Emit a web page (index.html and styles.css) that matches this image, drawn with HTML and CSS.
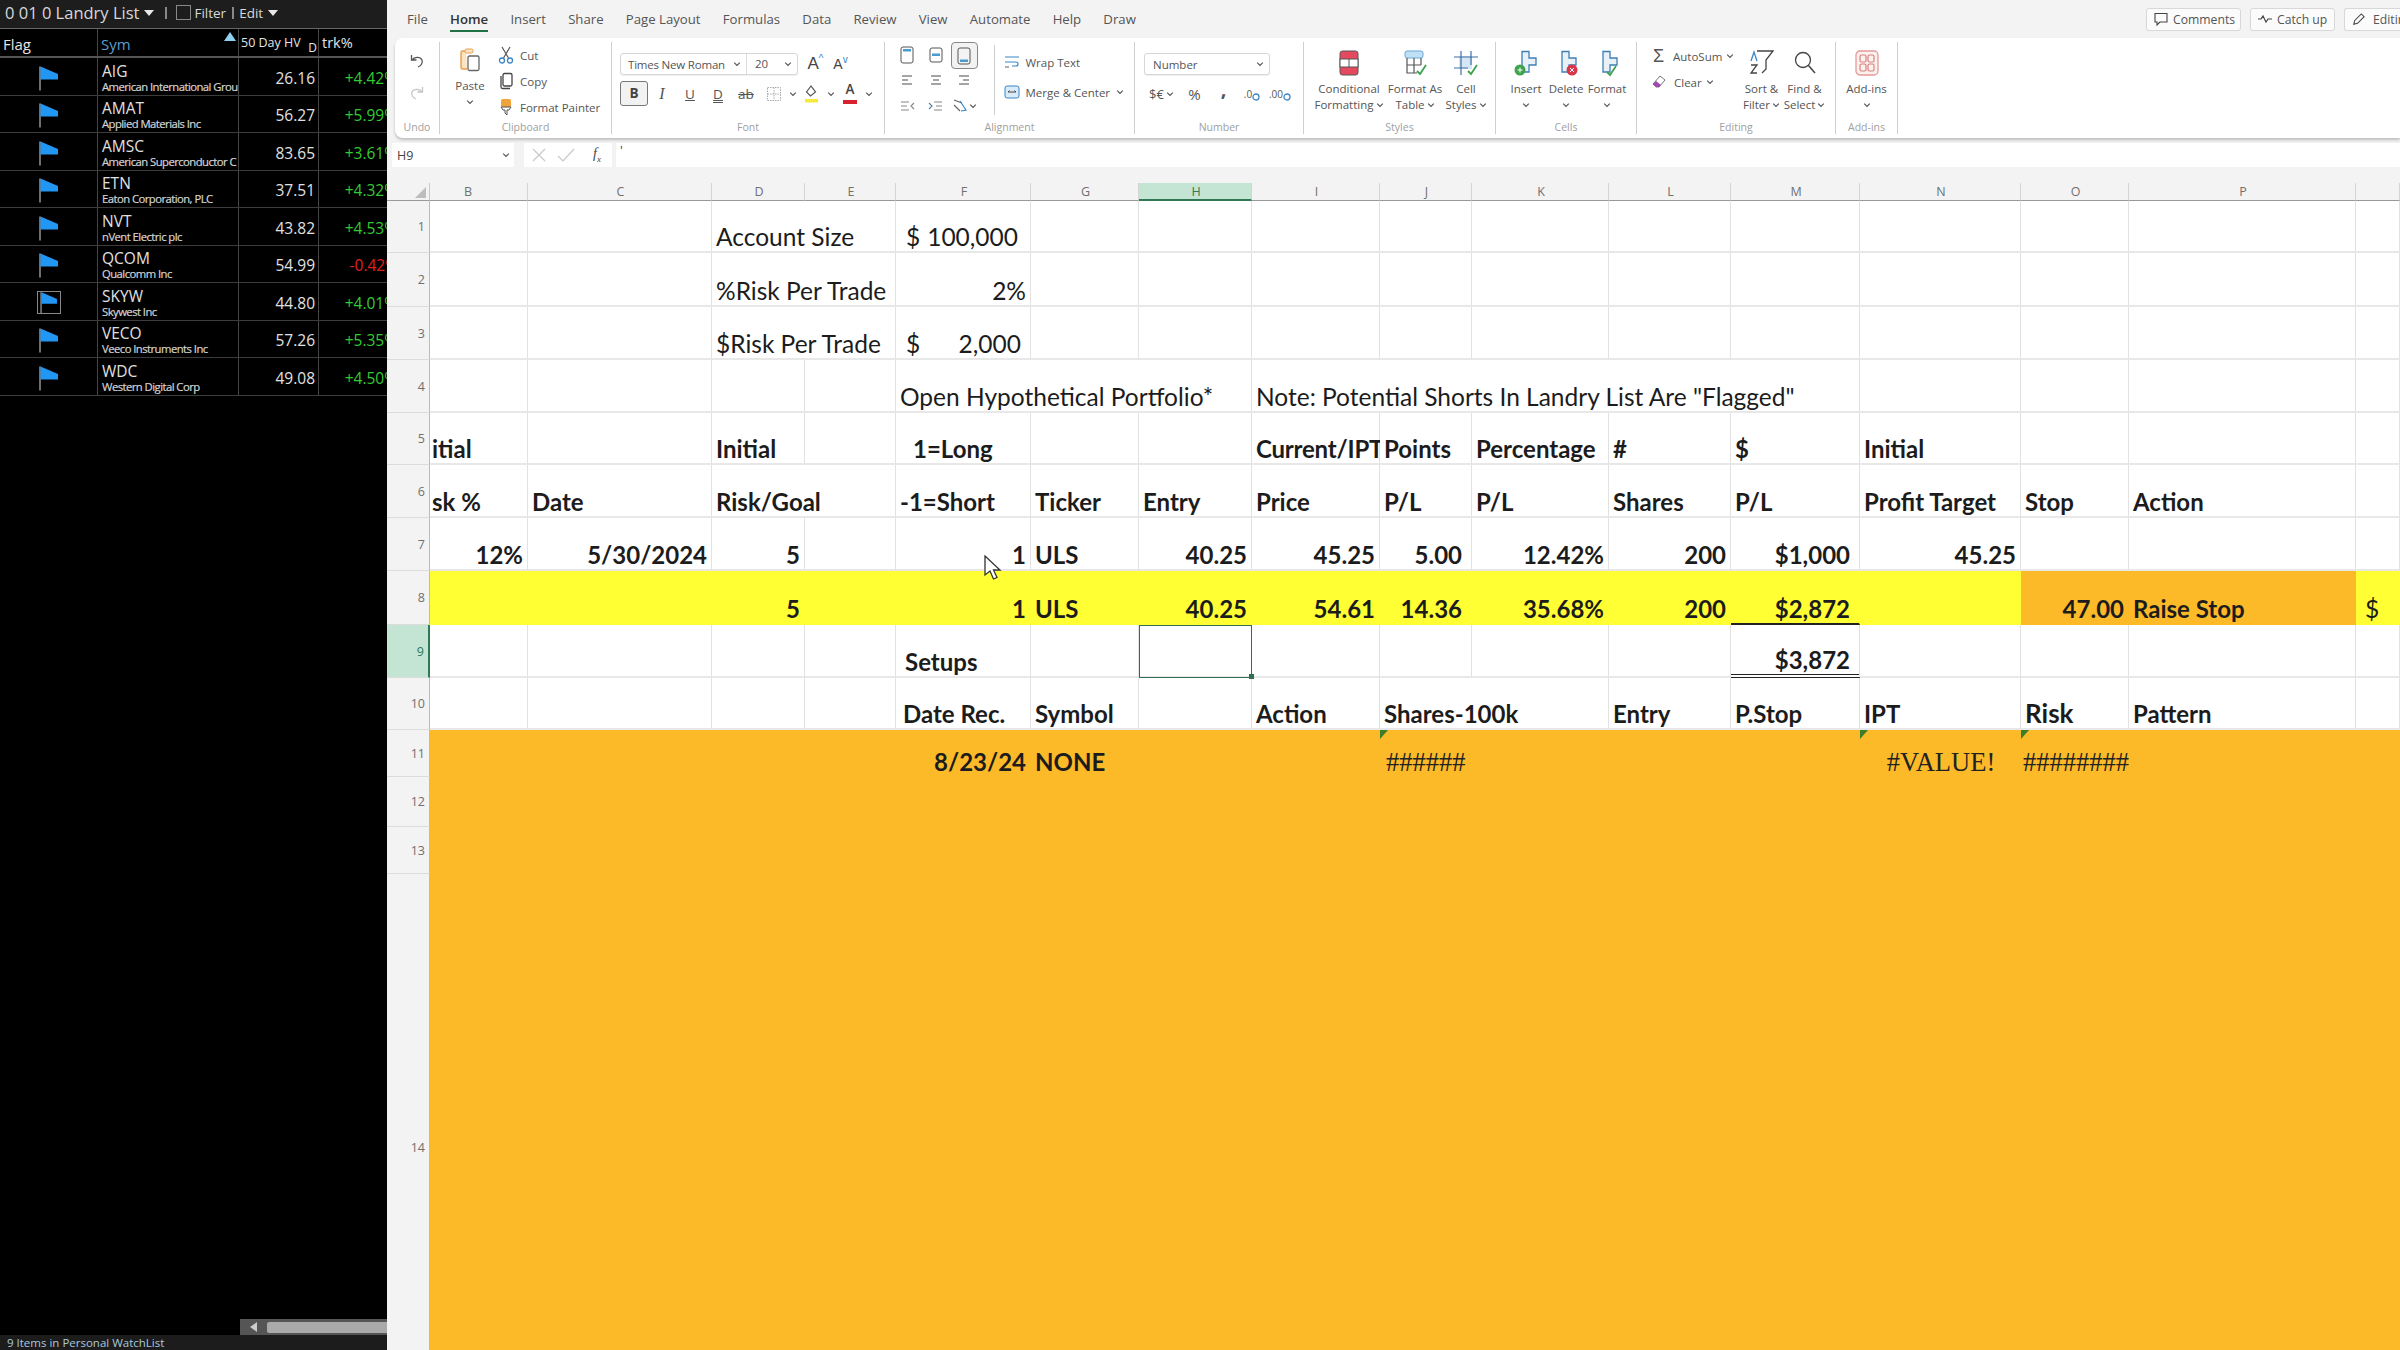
FILE: index.html
```html
<!DOCTYPE html>
<html lang="en">
<head>
<meta charset="utf-8">
<title>Landry List</title>
<link rel="stylesheet" href="styles.css">
</head>
<body>
<svg class="sprite" width="0" height="0">
  <symbol id="ch" viewBox="0 0 8 8"><path d="M1.2 2.6 4 5.4l2.8-2.8" fill="none" stroke="#555" stroke-width="1.2"/></symbol>
  <symbol id="flag" viewBox="0 0 24 26"><path d="M3 1.5v24" stroke="#ddd" stroke-width="1" fill="none"/><path d="M3.5 1.5 21 9v5.5H3.5z" fill="#2196f3"/></symbol>
  <symbol id="ins" viewBox="0 0 26 28"><path d="M9 9V2.5h7V9h7v7h-7v7H9z" fill="#e8f1f8" stroke="#3d7fb5" stroke-width="1.3"/></symbol>
</svg>
<div class="app">
  <aside class="watch">
    <div class="w-top">
      <span class="w-title">0 01 0 Landry List</span><i class="w-tri"></i>
      <i class="w-sep"></i><i class="w-box"></i><span class="w-filter">Filter</span>
      <i class="w-sep w-sep2"></i><span class="w-edit">Edit</span><i class="w-tri"></i>
    </div>
    <div class="w-row w-head">
      <div class="wc">Flag</div>
      <div class="wc w-sym">Sym<i class="w-sort"></i></div>
      <div class="wc w-hv">50 Day HV<sub>D</sub></div>
      <div class="wc w-trk">trk%</div>
    </div>
    <div class="w-row"><div class="wc wf"><svg class="flag"><use href="#flag"/></svg></div><div class="wc wn"><b>AIG</b><small>American International Grou</small></div><div class="wc wv">26.16</div><div class="wc wp"><span>+4.42%</span></div></div>
    <div class="w-row"><div class="wc wf"><svg class="flag"><use href="#flag"/></svg></div><div class="wc wn"><b>AMAT</b><small>Applied Materials Inc</small></div><div class="wc wv">56.27</div><div class="wc wp"><span>+5.99%</span></div></div>
    <div class="w-row"><div class="wc wf"><svg class="flag"><use href="#flag"/></svg></div><div class="wc wn"><b>AMSC</b><small>American Superconductor C</small></div><div class="wc wv">83.65</div><div class="wc wp"><span>+3.61%</span></div></div>
    <div class="w-row"><div class="wc wf"><svg class="flag"><use href="#flag"/></svg></div><div class="wc wn"><b>ETN</b><small>Eaton Corporation, PLC</small></div><div class="wc wv">37.51</div><div class="wc wp"><span>+4.32%</span></div></div>
    <div class="w-row"><div class="wc wf"><svg class="flag"><use href="#flag"/></svg></div><div class="wc wn"><b>NVT</b><small>nVent Electric plc</small></div><div class="wc wv">43.82</div><div class="wc wp"><span>+4.53%</span></div></div>
    <div class="w-row"><div class="wc wf"><svg class="flag"><use href="#flag"/></svg></div><div class="wc wn"><b>QCOM</b><small>Qualcomm Inc</small></div><div class="wc wv">54.99</div><div class="wc wp neg"><span>-0.42%</span></div></div>
    <div class="w-row"><div class="wc wf"><svg class="flag flag-sel"><use href="#flag"/></svg></div><div class="wc wn"><b>SKYW</b><small>Skywest Inc</small></div><div class="wc wv">44.80</div><div class="wc wp"><span>+4.01%</span></div></div>
    <div class="w-row"><div class="wc wf"><svg class="flag"><use href="#flag"/></svg></div><div class="wc wn"><b>VECO</b><small>Veeco Instruments Inc</small></div><div class="wc wv">57.26</div><div class="wc wp"><span>+5.35%</span></div></div>
    <div class="w-row"><div class="wc wf"><svg class="flag"><use href="#flag"/></svg></div><div class="wc wn"><b>WDC</b><small>Western Digital Corp</small></div><div class="wc wv">49.08</div><div class="wc wp"><span>+4.50%</span></div></div>
    <div class="w-fill"></div>
    <div class="w-scroll"><span class="w-arrow"><i></i></span><span class="w-thumb"></span></div>
    <div class="w-status">9 Items in Personal WatchList</div>
  </aside>

  <main class="excel">
    <nav class="tabs">
      <span>File</span><span class="on">Home</span><span>Insert</span><span>Share</span><span>Page Layout</span><span>Formulas</span><span>Data</span><span>Review</span><span>View</span><span>Automate</span><span>Help</span><span>Draw</span>
      <div class="acts">
        <button class="act a-com"><svg width="16" height="16" viewBox="0 0 16 16"><path d="M2 2.5h12v8.5H7l-3 3v-3H2z" fill="none" stroke="#444" stroke-width="1.1"/></svg>Comments</button>
        <button class="act a-cat"><svg width="16" height="12" viewBox="0 0 16 12"><path d="M1 6h3l2-3 3 6 2-3h4" fill="none" stroke="#444" stroke-width="1.2"/></svg>Catch up</button>
        <button class="act a-edi"><svg width="15" height="15" viewBox="0 0 16 16"><path d="M3 13l1-4 7-7 3 3-7 7z" fill="none" stroke="#444" stroke-width="1.1"/></svg>Editing</button>
      </div>
    </nav>

    <section class="ribbon">
      <div class="g g-undo">
        <div class="g-b undo-b">
          <svg width="16" height="16" viewBox="0 0 16 16"><path d="M2.5 2v5h5M3 7c2-3 8-4 10 0 1 3-1 6-4 7" fill="none" stroke="#555" stroke-width="1.3"/></svg>
          <svg width="16" height="16" viewBox="0 0 16 16"><path d="M13.500 2v5h-5M13 7c-2-3-8-4-10 0-1 3 1 6 4 7" fill="none" stroke="#c4c4c4" stroke-width="1.3"/></svg>
        </div>
        <div class="g-l">Undo</div>
      </div>
      <div class="g g-clip">
        <div class="g-b row">
          <div class="big paste">
            <svg width="22" height="24" viewBox="0 0 22 24"><path d="M7 3H3.500A1.500 1.500 0 0 0 2 4.500v15A1.500 1.500 0 0 0 3.500 21H8" fill="#fbe3c4" stroke="#e9a04c" stroke-width="1.4"/><rect x="6" y="1" width="8" height="4" rx="1.500" fill="#fbe3c4" stroke="#e9a04c"/><rect x="9" y="8" width="11" height="14.500" rx="1.500" fill="#fff" stroke="#666" stroke-width="1.3"/></svg>
            <span class="lb">Paste</span>
            <svg class="chev"><use href="#ch"/></svg>
          </div>
          <div class="list clip-list">
            <div><svg width="16" height="18" viewBox="0 0 16 18"><path d="M4 1l6.500 11M12 1 5.500 12" stroke="#555" stroke-width="1.2" fill="none"/><circle cx="4" cy="14.500" r="2.500" fill="none" stroke="#3b86c6" stroke-width="1.300"/><circle cx="12" cy="14.500" r="2.500" fill="none" stroke="#3b86c6" stroke-width="1.300"/></svg>Cut</div>
            <div><svg width="16" height="18" viewBox="0 0 16 18"><rect x="5" y="1.500" width="9" height="12.500" rx="1.500" fill="#fff" stroke="#444" stroke-width="1.3"/><path d="M3 4v11a1.500 1.500 0 0 0 1.500 1.500H12" fill="none" stroke="#444" stroke-width="1.3"/></svg>Copy</div>
            <div><svg width="16" height="18" viewBox="0 0 16 18"><rect x="3" y="1" width="10" height="8" rx="1.500" fill="#f0a33c"/><path d="M3 9h10l-2 3H9v5l-2-2v-3H5z" fill="#fff" stroke="#555"/></svg>Format Painter</div>
          </div>
        </div>
        <div class="g-l">Clipboard</div>
      </div>
      <div class="g g-font">
        <div class="g-b col">
          <div class="fr1">
            <div class="sel-box fontsel"><span class="fname">Times New Roman</span><svg class="chev"><use href="#ch"/></svg><span class="fsize">20</span><svg class="chev"><use href="#ch"/></svg></div>
            <span class="grow">A<sup>^</sup></span><span class="grow shrink">A<sup>v</sup></span>
          </div>
          <div class="fr2">
            <span class="bbtn">B</span><span class="ti it">I</span><span class="ti un">U</span><span class="ti dn">D</span><span class="ti st">ab</span>
            <span class="ti"><svg width="16" height="16" viewBox="0 0 16 16"><path d="M1.500 1.500h13v13h-13zM8 1.500v13M1.500 8h13" fill="none" stroke="#aaa" stroke-dasharray="1.500 1"/></svg></span><svg class="chev sm"><use href="#ch"/></svg>
            <span class="ti tf"><svg width="16" height="18" viewBox="0 0 16 18"><path d="M7 1 2.500 7l4 4 5-4z" fill="#fff" stroke="#555" stroke-width="1.200"/><rect x="1" y="14" width="13" height="3.500" fill="#f5e93b"/></svg></span><svg class="chev sm"><use href="#ch"/></svg>
            <span class="ti tc">A<i></i></span><svg class="chev sm"><use href="#ch"/></svg>
          </div>
        </div>
        <div class="g-l">Font</div>
      </div>
      <div class="g g-align">
        <div class="g-b row">
          <div class="agrid">
            <span><svg width="14" height="18" viewBox="0 0 14 18"><rect x="1" y="1" width="12" height="16" rx="2" fill="none" stroke="#555"/><rect x="3" y="3" width="8" height="2.500" fill="#4a9bd1"/></svg></span>
            <span><svg width="14" height="18" viewBox="0 0 14 18"><rect x="1" y="2" width="12" height="14" rx="2" fill="none" stroke="#555"/><rect x="3" y="7.500" width="8" height="2.500" fill="#4a9bd1"/></svg></span>
            <span class="on"><svg width="14" height="18" viewBox="0 0 14 18"><rect x="1" y="1" width="12" height="16" rx="2" fill="#f4f4f4" stroke="#555"/><rect x="3" y="12.500" width="8" height="2.500" fill="#4a9bd1"/></svg></span>
            <span><svg width="14" height="12" viewBox="0 0 14 12"><path d="M2 2h10M2 6h6M2 10h10" stroke="#888" stroke-width="1.300"/></svg></span>
            <span><svg width="14" height="12" viewBox="0 0 14 12"><path d="M2 2h10M4 6h6M2 10h10" stroke="#888" stroke-width="1.300"/></svg></span>
            <span><svg width="14" height="12" viewBox="0 0 14 12"><path d="M2 2h10M6 6h6M2 10h10" stroke="#888" stroke-width="1.300"/></svg></span>
            <span><svg width="15" height="12" viewBox="0 0 15 12"><path d="M1 2h8M1 6h6M1 10h8M14 3l-3 3 3 3" stroke="#888" stroke-width="1.200" fill="none"/></svg></span>
            <span><svg width="15" height="12" viewBox="0 0 15 12"><path d="M1 3l3 3-3 3M6 2h8M8 6h6M6 10h8" stroke="#888" stroke-width="1.200" fill="none"/><path d="M1 3l3 3-3 3" stroke="#3b86c6" fill="none"/></svg></span>
            <span class="orient"><svg width="15" height="15" viewBox="0 0 15 15"><path d="M2 2l8 3M2 7l6 6" stroke="#666" fill="none" stroke-width="1.200"/><path d="M8 3l6 9-5 1" stroke="#3b86c6" fill="none" stroke-width="1.200"/></svg><svg class="chev"><use href="#ch"/></svg></span>
          </div>
          <i class="vdiv"></i>
          <div class="list wrap-list">
            <div><svg width="16" height="14" viewBox="0 0 16 14"><path d="M1 2h14M1 7h11a2 2 0 0 1 0 4H8" stroke="#3b86c6" stroke-width="1.200" fill="none"/><path d="M1 12h4" stroke="#777" stroke-width="1.200"/></svg>Wrap Text</div>
            <div><svg width="16" height="16" viewBox="0 0 16 16"><rect x="1" y="2" width="14" height="12" rx="2" fill="#d9ebf7" stroke="#3b86c6"/><path d="M4 8h8M4 8l1.500-1.500M12 8l-1.500-1.500" stroke="#444" fill="none"/></svg>Merge &amp; Center<svg class="chev"><use href="#ch"/></svg></div>
          </div>
        </div>
        <div class="g-l">Alignment</div>
      </div>
      <div class="g g-num">
        <div class="g-b col">
          <div class="sel-box numsel"><span>Number</span><svg class="chev"><use href="#ch"/></svg></div>
          <div class="nr">
            <span class="cur">$€<svg class="chev"><use href="#ch"/></svg></span><span class="pct">%</span><span class="cma">,</span>
            <span class="dec">.0<svg width="8" height="8" viewBox="0 0 8 8"><circle cx="4" cy="4" r="3" fill="none" stroke="#3b86c6" stroke-width="1.300"/></svg></span>
            <span class="dec">.00<svg width="8" height="8" viewBox="0 0 8 8"><circle cx="4" cy="4" r="3" fill="none" stroke="#3b86c6" stroke-width="1.300"/></svg></span>
          </div>
        </div>
        <div class="g-l">Number</div>
      </div>
      <div class="g g-sty">
        <div class="g-b row">
          <div class="big b-cf">
            <svg width="22" height="26" viewBox="0 0 22 26"><rect x="2" y="1" width="18" height="24" rx="2.500" fill="#e5495f" stroke="#555"/><rect x="2" y="9" width="18" height="8" fill="#fff" stroke="#555"/><path d="M11 9v8" stroke="#555"/></svg>
            <span class="lb">Conditional<br>Formatting<svg class="chev"><use href="#ch"/></svg></span>
          </div>
          <div class="big b-ft">
            <svg width="26" height="26" viewBox="0 0 26 26"><rect x="3" y="1" width="18" height="7" rx="2" fill="#bfe0f5" stroke="#6aa9d8"/><path d="M5 8v15h10M5 15h14M12 8v15M19 8v7" fill="none" stroke="#555" stroke-width="1.200"/><path d="M15 21l3 3 6-9" stroke="#3fa34d" stroke-width="1.800" fill="none"/></svg>
            <span class="lb">Format As<br>Table<svg class="chev"><use href="#ch"/></svg></span>
          </div>
          <div class="big b-cs">
            <svg width="26" height="26" viewBox="0 0 26 26"><rect x="6" y="6" width="13" height="13" fill="#d5e6f5"/><path d="M8 1v24M18 1v14M1 7h24M1 18h14" stroke="#3f6fa5" stroke-width="1.200" fill="none"/><path d="M15 21l3 3 6-9" stroke="#3fa34d" stroke-width="1.800" fill="none"/></svg>
            <span class="lb">Cell<br>Styles<svg class="chev"><use href="#ch"/></svg></span>
          </div>
        </div>
        <div class="g-l">Styles</div>
      </div>
      <div class="g g-cells">
        <div class="g-b row">
          <div class="big b-c1"><svg width="26" height="28" viewBox="0 0 26 28"><use href="#ins"/><circle cx="7" cy="21" r="5.500" fill="#3fa34d"/><path d="M4.500 21h5M7 18.500v5" stroke="#fff"/></svg><span class="lb">Insert</span><svg class="chev"><use href="#ch"/></svg></div>
          <div class="big b-c2"><svg width="26" height="28" viewBox="0 0 26 28"><use href="#ins"/><circle cx="19" cy="21" r="5.500" fill="#d9364c"/><path d="M17 19l4 4M21 19l-4 4" stroke="#fff"/></svg><span class="lb">Delete</span><svg class="chev"><use href="#ch"/></svg></div>
          <div class="big b-c3"><svg width="26" height="28" viewBox="0 0 26 28"><use href="#ins"/><path d="M13 23l3 3 6-9" stroke="#3fa34d" stroke-width="1.800" fill="none"/></svg><span class="lb">Format</span><svg class="chev"><use href="#ch"/></svg></div>
        </div>
        <div class="g-l">Cells</div>
      </div>
      <div class="g g-edit">
        <div class="g-b row">
          <div class="list edit-list">
            <div><span class="sigma">Σ</span>AutoSum<svg class="chev"><use href="#ch"/></svg></div>
            <div><svg width="16" height="16" viewBox="0 0 16 16"><path d="M9 2l5 4-6 7H5L2 10z" fill="#fff" stroke="#777"/><path d="M2 10l3 3h3l2-2-5-4z" fill="#a04bb5"/></svg>Clear<svg class="chev"><use href="#ch"/></svg></div>
          </div>
          <div class="big b-sf"><svg width="26" height="28" viewBox="0 0 26 28"><path d="M8 2h16l-7 9v9l-4 4" fill="none" stroke="#444" stroke-width="1.300"/><path d="M2 12l3-9 3 9" stroke="#3b86c6" stroke-width="1.300" fill="none"/><path d="M2 16h6l-6 8h6" stroke="#444" stroke-width="1.300" fill="none"/></svg><span class="lb">Sort &amp;<br>Filter<svg class="chev"><use href="#ch"/></svg></span></div>
          <div class="big b-fs"><svg width="26" height="28" viewBox="0 0 26 28"><circle cx="11" cy="11" r="7.500" fill="none" stroke="#444" stroke-width="1.300"/><path d="M16.500 16.500 23 24" stroke="#444" stroke-width="1.500"/></svg><span class="lb">Find &amp;<br>Select<svg class="chev"><use href="#ch"/></svg></span></div>
        </div>
        <div class="g-l">Editing</div>
      </div>
      <div class="g g-add">
        <div class="g-b row">
          <div class="big b-ad"><svg width="24" height="26" viewBox="0 0 24 26"><rect x="1" y="1" width="22" height="24" rx="4" fill="#fdf1f0" stroke="#e39a97" stroke-width="1.300"/><rect x="5" y="5" width="6" height="7" rx="1.500" fill="none" stroke="#d9807c" stroke-width="1.200"/><rect x="13" y="5" width="6" height="7" rx="1.500" fill="none" stroke="#d9807c" stroke-width="1.200"/><rect x="5" y="14" width="6" height="7" rx="1.500" fill="none" stroke="#d9807c" stroke-width="1.200"/><rect x="13" y="14" width="6" height="7" rx="1.500" fill="none" stroke="#d9807c" stroke-width="1.200"/></svg><span class="lb">Add-ins</span><svg class="chev"><use href="#ch"/></svg></div>
        </div>
        <div class="g-l">Add-ins</div>
      </div>
    </section>

    <div class="fbar">
      <div class="namebox"><span>H9</span><svg class="chev"><use href="#ch"/></svg></div>
      <div class="fxbtns">
        <svg width="16" height="16" viewBox="0 0 16 16"><path d="M2 2l12 12M14 2 2 14" stroke="#c8c8c8" stroke-width="1.200"/></svg>
        <svg width="18" height="16" viewBox="0 0 18 16"><path d="M1 9l5 5L17 2" stroke="#c8c8c8" stroke-width="1.200" fill="none"/></svg>
        <span class="fx">f<sub>x</sub></span>
      </div>
      <div class="formula">'</div>
    </div>

    <section class="sheet">
      <div class="ch corner"><i></i></div><div class="ch ch-b">B</div><div class="ch">C</div><div class="ch">D</div><div class="ch">E</div><div class="ch">F</div><div class="ch">G</div><div class="ch ch-on">H</div><div class="ch">I</div><div class="ch">J</div><div class="ch">K</div><div class="ch">L</div><div class="ch">M</div><div class="ch">N</div><div class="ch">O</div><div class="ch">P</div><div class="ch"></div>

      <div class="rh">1</div><div class="c"></div><div class="c"></div><div class="c s2">Account Size</div><div class="c acct a1"><span>$</span><span>100,000</span></div><div class="c"></div><div class="c"></div><div class="c"></div><div class="c"></div><div class="c"></div><div class="c"></div><div class="c"></div><div class="c"></div><div class="c"></div><div class="c"></div><div class="c"></div>

      <div class="rh">2</div><div class="c"></div><div class="c"></div><div class="c s2">%Risk Per Trade</div><div class="c r">2%</div><div class="c"></div><div class="c"></div><div class="c"></div><div class="c"></div><div class="c"></div><div class="c"></div><div class="c"></div><div class="c"></div><div class="c"></div><div class="c"></div><div class="c"></div>

      <div class="rh">3</div><div class="c"></div><div class="c"></div><div class="c s2">$Risk Per Trade</div><div class="c acct a3"><span>$</span><span>2,000</span></div><div class="c"></div><div class="c"></div><div class="c"></div><div class="c"></div><div class="c"></div><div class="c"></div><div class="c"></div><div class="c"></div><div class="c"></div><div class="c"></div><div class="c"></div>

      <div class="rh">4</div><div class="c"></div><div class="c"></div><div class="c"></div><div class="c"></div><div class="c s3">Open Hypothetical Portfolio*</div><div class="c s5">Note: Potential Shorts In Landry List Are "Flagged"</div><div class="c"></div><div class="c"></div><div class="c"></div><div class="c"></div>

      <div class="rh">5</div><div class="c b clip">itial</div><div class="c"></div><div class="c b">Initial</div><div class="c"></div><div class="c b in1">1=Long</div><div class="c"></div><div class="c"></div><div class="c b tight">Current/IPT</div><div class="c b">Points</div><div class="c b">Percentage</div><div class="c b">#</div><div class="c b">$</div><div class="c b">Initial</div><div class="c"></div><div class="c"></div><div class="c"></div>

      <div class="rh">6</div><div class="c b clip">sk %</div><div class="c b">Date</div><div class="c b s2">Risk/Goal</div><div class="c b">-1=Short</div><div class="c b">Ticker</div><div class="c b">Entry</div><div class="c b">Price</div><div class="c b">P/L</div><div class="c b">P/L</div><div class="c b">Shares</div><div class="c b">P/L</div><div class="c b">Profit Target</div><div class="c b">Stop</div><div class="c b">Action</div><div class="c"></div>

      <div class="rh">7</div><div class="c b r">12%</div><div class="c b r">5/30/2024</div><div class="c b r">5</div><div class="c"></div><div class="c b r">1</div><div class="c b">ULS</div><div class="c b r">40.25</div><div class="c b r">45.25</div><div class="c b r pj">5.00</div><div class="c b r">12.42%</div><div class="c b r">200</div><div class="c b r pm">$1,000</div><div class="c b r">45.25</div><div class="c"></div><div class="c"></div><div class="c"></div>

      <div class="rh">8</div><div class="c y"></div><div class="c y"></div><div class="c y b r">5</div><div class="c y"></div><div class="c y b r">1</div><div class="c y b">ULS</div><div class="c y b r">40.25</div><div class="c y b r">54.61</div><div class="c y b r pj">14.36</div><div class="c y b r">35.68%</div><div class="c y b r">200</div><div class="c y b r under pm">$2,872</div><div class="c y"></div><div class="c o b r">47.00</div><div class="c o b">Raise Stop</div><div class="c y in4">$</div>

      <div class="rh rh-on">9</div><div class="c"></div><div class="c"></div><div class="c"></div><div class="c"></div><div class="c b in2">Setups</div><div class="c"></div><div class="c cur-cell"></div><div class="c"></div><div class="c"></div><div class="c"></div><div class="c"></div><div class="c b r dbl pm">$3,872</div><div class="c"></div><div class="c"></div><div class="c"></div><div class="c"></div>

      <div class="rh">10</div><div class="c"></div><div class="c"></div><div class="c"></div><div class="c"></div><div class="c b in3">Date Rec.</div><div class="c b">Symbol</div><div class="c"></div><div class="c b">Action</div><div class="c b s2">Shares-100k</div><div class="c b">Entry</div><div class="c b">P.Stop</div><div class="c b">IPT</div><div class="c b risk">Risk</div><div class="c b">Pattern</div><div class="c"></div>

      <div class="rh">11</div><div class="c o s4"></div><div class="c o b r t11">8/23/24</div><div class="c o b t11">NONE</div><div class="c o s2"></div><div class="c o tri serif">######</div><div class="c o s3"></div><div class="c o tri serif ctr">#VALUE!</div><div class="c o tri serif hash">########</div><div class="c o s2"></div>
      <div class="rh">12</div><div class="c o s16"></div>
      <div class="rh">13</div><div class="c o s16"></div>
      <div class="rh">14</div><div class="c o s16"></div>

      <svg class="pointer" width="20" height="26" viewBox="0 0 20 26"><path d="M2 1v19l5-4 3.500 8 3.500-1.500L10.500 15H17z" fill="#fff" stroke="#333" stroke-width="1.300"/></svg>
    </section>
  </main>
</div>
</body>
</html>
```
FILE: styles.css
```css
* { box-sizing: border-box; }
html, body { margin: 0; padding: 0; }
body { font-family: "Open Sans", "Noto Sans", sans-serif; background: #000; }
.sprite { position: absolute; }
i { font-style: normal; }
svg { flex: none; }
.app { display: flex; width: 2400px; height: 1350px; overflow: hidden; }

/* watchlist */
.watch { width: 387px; flex: none; background: #000; color: #ddd; display: flex; flex-direction: column; overflow: hidden; }
.w-top { height: 29px; background: #1d1d1d; display: flex; align-items: center; padding: 0 0 3px 5px; font-size: 16px; color: #d8d8d8; border-bottom: 1px solid #666; flex: none; }
.w-title { font-size: 16.500px; }
.w-tri { width: 0; height: 0; border: 5px solid transparent; border-top: 6px solid #e8e8e8; border-bottom: 0; margin-left: 5px; }
.w-sep { width: 2px; height: 12px; background: #888; margin: 0 9px 0 11px; }
.w-sep2 { margin: 0 5px 0 6px; }
.w-box { width: 15px; height: 15px; border: 1px solid #888; margin-right: 3px; }
.w-filter, .w-edit { font-size: 13.500px; }
.w-row { display: grid; grid-template-columns: 98px 141px 80px 68px; height: 37.500px; border-bottom: 1px solid #3c3c3c; flex: none; }
.w-head { height: 29px; border-bottom: 2px solid #555; }
.wc { border-right: 1px solid #444; display: flex; align-items: center; overflow: hidden; white-space: nowrap; position: relative; padding-top: 3px; }
.wc:last-child { border-right: 0; }
.w-head .wc { font-size: 15px; padding-left: 3px; color: #e4e4e4; padding-top: 2px; }
.w-head .w-sym { color: #5d9ccb; }
.w-sort { position: absolute; right: 2px; top: 3px; border: 6px solid transparent; border-bottom: 9px solid #8fd0f0; border-top: 0; }
.w-head .w-hv { font-size: 12.500px; padding-left: 2px; padding-top: 0; }
.w-hv sub { font-size: 12px; position: absolute; right: 1px; bottom: 0; }
.w-head .w-trk { font-size: 14.500px; padding-top: 0; }
.wf { justify-content: center; padding-left: 1px; }
.flag { width: 24px; height: 26px; }
.flag-sel { outline: 1px solid #888; outline-offset: -1px; height: 23px; }
.wn { flex-direction: column; align-items: flex-start; justify-content: center; padding-left: 4px; }
.wn b { font-weight: 400; font-size: 15.500px; line-height: 18px; color: #e0e0e0; }
.wn small { font-size: 11.300px; line-height: 14px; letter-spacing: -0.55px; color: #d4d4d4; -webkit-text-stroke: 0.2px #d4d4d4; }
.wv { justify-content: flex-end; padding-right: 3px; font-size: 15.500px; color: #e0e0e0; }
.wp { justify-content: flex-end; font-size: 15.500px; color: #34c934; }
.wp span { margin-right: -10px; }
.wp.neg { color: #e02020; }
.wp.neg span { margin-right: -11px; }
.w-fill { flex: 1; }
.w-scroll { margin-left: 240px; height: 16px; background: #555; display: flex; align-items: center; flex: none; }
.w-arrow { width: 27px; display: flex; justify-content: center; }
.w-arrow i { border: 5px solid transparent; border-right: 7px solid #ccc; border-left: 0; }
.w-thumb { flex: 1; height: 11px; background: #aaa; border-radius: 2px 0 0 2px; }
.w-status { height: 15px; background: #1c1c1c; font-size: 11.500px; line-height: 15px; padding-left: 7px; color: #a9c8dc; flex: none; }

/* excel */
.excel { flex: 1; min-width: 0; background: #f3f3f3; display: flex; flex-direction: column; overflow: hidden; color: #555; }
.tabs { height: 38px; display: flex; align-items: center; gap: 22.200px; padding: 0 0 0 20px; font-size: 13.200px; color: #555; flex: none; position: relative; }
.tabs > span { line-height: 38px; height: 38px; padding-top: 0; }
.tabs .on { font-weight: 600; color: #333; position: relative; }
.tabs .on::after { content: ""; position: absolute; left: 0; right: 0; bottom: 6px; height: 2px; background: #217346; }
.acts { margin-left: auto; display: flex; gap: 9px; }
.act { height: 23px; background: #fbfbfb; border: 1px solid #d8d8d8; border-radius: 3px; font: 12.200px "Open Sans", sans-serif; color: #555; display: flex; align-items: center; gap: 4px; padding: 0 6px; overflow: hidden; white-space: nowrap; }
.a-com { width: 95px; }
.a-cat { width: 85px; }
.a-edi { width: 56px; border-right: 0; border-radius: 3px 0 0 3px; padding-right: 0; gap: 7px; }

.ribbon { height: 100px; margin-left: 8px; background: #fff; border-radius: 8px 0 0 8px; box-shadow: 0 2px 3px rgba(0,0,0,.22); display: flex; padding: 4px 0; flex: none; font-size: 11.500px; color: #555; white-space: nowrap; }
.g { display: flex; flex-direction: column; border-right: 1px solid #cfcfcf; flex: none; }
.g-b { flex: 1; min-height: 0; }
.g-l { height: 14px; text-align: center; font-size: 10.500px; color: #a0a0a0; line-height: 14px; }
.row { display: flex; }
.col { display: flex; flex-direction: column; }
.g-undo { width: 45px; }
.g-clip { width: 172px; }
.g-font { width: 273px; }
.g-align { width: 250px; }
.g-num { width: 169px; }
.g-sty { width: 192px; }
.g-cells { width: 141px; }
.g-edit { width: 199px; }
.g-add { width: 62px; }
.undo-b { display: flex; flex-direction: column; align-items: center; padding-top: 11px; gap: 16px; }
.chev { width: 8px; height: 8px; flex: none; }
.big { display: flex; flex-direction: column; align-items: center; text-align: center; flex: none; line-height: 16px; padding-top: 7px; }
.big > svg:first-child { height: 28px; margin-bottom: 4px; }
.lb .chev { margin-left: 2px; }
.paste { width: 48px; margin-left: 6px; padding-top: 6px; }
.paste > svg:first-child { height: 24px; margin-bottom: 6px; }
.paste .chev, .b-c1 .chev, .b-c2 .chev, .b-c3 .chev, .b-ad .chev { margin-top: 4px; }
.list { display: flex; flex-direction: column; }
.list > div { display: flex; align-items: center; gap: 6px; height: 26.500px; }
.clip-list { margin-left: 4px; padding-top: 0; font-size: 11.500px; }
.fr1 { display: flex; align-items: center; height: 22px; margin-top: 11px; padding-left: 8px; }
.sel-box { height: 22px; border: 1px solid #d6d6d6; border-radius: 3px; display: flex; align-items: center; background: #fff; box-shadow: 0 1px 1px rgba(0,0,0,.06); }
.fontsel { width: 178px; font-size: 11.500px; }
.fname { width: 112px; padding-left: 7px; letter-spacing: -0.2px; }
.fsize { width: 38px; border-left: 1px solid #ddd; margin-left: 5px; padding-left: 8px; line-height: 20px; }
.grow { width: 25px; text-align: center; font-size: 17px; color: #444; font-family: "Liberation Sans", sans-serif; }
.grow:first-of-type { margin-left: 5px; }
.grow sup { font-size: 10px; color: #3b86c6; line-height: 0; }
.shrink { font-size: 14px; }
.fr2 { display: flex; align-items: center; height: 25px; margin-top: 6px; padding-left: 8px; }
.bbtn { width: 28px; height: 25px; border: 1px solid #777; border-radius: 3px; background: #f2f2f2; text-align: center; line-height: 23px; font-weight: 700; font-size: 13.500px; color: #444; }
.ti { width: 28px; text-align: center; font-size: 14px; color: #555; display: flex; justify-content: center; align-items: center; height: 25px; position: relative; flex: none; }
.it { font-style: italic; font-family: "Liberation Serif", serif; font-size: 16px; }
.un { text-decoration: underline; font-size: 13.500px; }
.dn { text-decoration: underline double; font-size: 13.500px; }
.st { text-decoration: line-through; font-size: 13.500px; }
.sm { margin: 0 1px; }
.tf { margin-left: 0; }
.tc { font-size: 13.500px; font-weight: 600; color: #444; align-items: flex-start; line-height: 17px; }
.tc i { position: absolute; left: 7px; right: 7px; bottom: 2px; height: 4px; background: #d8232e; }
.agrid { display: grid; grid-template-columns: repeat(3, 28.500px); grid-auto-rows: 25.500px; margin: 0 0 0 8px; }
.agrid > span { display: flex; align-items: center; justify-content: center; gap: 2px; border-radius: 4px; }
.agrid > .on { border: 1px solid #888; background: #f2f2f2; margin: 0 1px; height: 27px; }
.vdiv { width: 1px; height: 70px; background: #cfcfcf; margin: 3px 9px 0 15px; flex: none; }
.wrap-list { padding-top: 5px; font-size: 11.500px; }
.wrap-list > div { height: 30px; }
.numsel { width: 126px; margin: 11px 0 0 9px; justify-content: space-between; padding: 0 5px 0 8px; font-size: 11.500px; flex: none; }
.nr { display: flex; align-items: center; margin-top: 8px; padding-left: 14px; height: 22px; color: #555; }
.cur { width: 31px; display: flex; align-items: center; gap: 2px; font-size: 13px; }
.pct { width: 29px; text-align: center; font-size: 15px; }
.cma { width: 29px; text-align: center; font-weight: 700; font-size: 20px; line-height: 10px; margin-bottom: 10px; }
.dec { width: 28px; font-size: 10px; display: flex; align-items: flex-end; justify-content: center; }
.b-cf { width: 72px; margin-left: 9px; }
.b-ft { width: 60px; }
.b-cs { width: 42px; }
.b-c1 { width: 40px; margin-left: 10px; }
.b-c2 { width: 40px; }
.b-c3 { width: 42px; }
.edit-list { width: 103px; padding: 1px 0 0 14px; }
.edit-list > div { gap: 7px; height: 26px; }
.edit-list .chev { margin-left: -3px; }
.sigma { font-size: 18px; width: 15px; text-align: center; color: #555; font-family: "Liberation Sans", sans-serif; }
.b-sf { width: 43px; }
.b-fs { width: 43px; }
.b-ad { width: 61px; }

.fbar { display: flex; height: 24px; margin: 5px 0 0 5px; flex: none; font-size: 12.500px; color: #444; }
.namebox { width: 122px; background: #fff; display: flex; align-items: center; justify-content: space-between; padding: 0 4px 0 5px; }
.fxbtns { width: 88px; margin-left: 10px; background: #fff; display: flex; align-items: center; gap: 10px; padding-left: 7px; }
.fx { font-family: "Liberation Serif", serif; font-style: italic; font-size: 14px; margin-left: 8px; }
.fx sub { font-size: 9px; }
.formula { flex: 1; background: #fff; margin-left: 4px; padding-left: 4px; line-height: 16px; }

.sheet { flex: 1; min-height: 0; margin-top: 16px; position: relative; overflow: hidden; display: grid; align-content: start;
  grid-template-columns: 43px 98px 184px 93px 91px 135px 108px 113px 128px 92px 137px 122px 129px 161px 108px 227px 44px;
  grid-template-rows: 18px 52px 54px 53px 53px 52px 53px 53px 54px 53px 52px 47px 50px 47px 548px;
  font-family: Lato, "Open Sans", sans-serif; font-size: 24.500px; color: #1c1c1c; }
.ch { border-right: 1px solid #d4d4d4; border-bottom: 1px solid #999; font: 12.500px/17px "Open Sans", sans-serif; color: #707070; text-align: center; padding-left: 2px; }
.ch:last-of-type { border-right: 0; }
.ch-b { padding: 0 21px 0 0; }
.ch-on { background: #c5e5d4; color: #2f7a55; border-bottom: 2px solid #2f7a55; }
.corner { border-right: 1px solid #c8c8c8; position: relative; }
.corner i { position: absolute; right: 3px; bottom: 2px; border-style: solid; border-width: 0 0 11px 11px; border-color: transparent transparent #bdbdbd transparent; }
.rh { border-bottom: 1px solid #dcdcdc; border-right: 1px solid #bbb; font: 12.500px/1 "Open Sans", sans-serif; color: #6f6f6f; display: flex; align-items: center; justify-content: flex-end; padding: 2px 4px 0 0; }
.rh-on { background: #c5e5d4; color: #2f7a55; border-right: 2px solid #2f7a55; }
.c { background: #fff; border-right: 1px solid #e2e2e2; border-bottom: 2px solid #e8e8e8; display: flex; align-items: flex-end; padding: 0 4px 0 4px; white-space: nowrap; position: relative; line-height: 29px; min-width: 0; }
.b { font-weight: 700; font-size: 24px; }
.r { justify-content: flex-end; }
.s2 { grid-column: span 2; }
.s3 { grid-column: span 3; }
.s4 { grid-column: span 4; }
.s5 { grid-column: span 5; }
.s16 { grid-column: span 16; }
.clip { padding-left: 2px; }
.acct { justify-content: space-between; padding-left: 10px; }
.a1 { padding-right: 12px; }
.a3 { padding-right: 9px; }
.in1 { padding-left: 17px; }
.in2 { padding-left: 9px; }
.in3 { padding-left: 7px; }
.in4 { padding-left: 9px; }
.pj { padding-right: 9px; }
.pm { padding-right: 9px; }
.tight { letter-spacing: -0.2px; }
.y { background: #ffff33; border-color: #ffff33; }
.o { background: #fcba28; border-color: #fcba28; }
.under { border-bottom: 2px solid #222; }
.dbl { border-bottom: 4px double #222; }
.risk { font-size: 26px; }
.cur-cell { outline: 1.500px solid #2f6f52; outline-offset: -1px; z-index: 1; }
.cur-cell::after { content: ""; position: absolute; right: -3px; bottom: -3px; width: 5px; height: 5px; background: #2f6f52; }
.t11 { padding-bottom: 0; line-height: 27px; }
.serif { font-family: "Liberation Serif", serif; font-size: 26.500px; padding-left: 6px; padding-bottom: 0; line-height: 26px; color: #222; }
.hash { padding-left: 2px; }
.ctr { justify-content: center; }
.tri::before { content: ""; position: absolute; left: 0; top: 0; border-style: solid; border-width: 9px 8px 0 0; border-color: #3c7d2a transparent transparent transparent; }
.pointer { position: absolute; left: 596px; top: 372px; z-index: 2; }
```
